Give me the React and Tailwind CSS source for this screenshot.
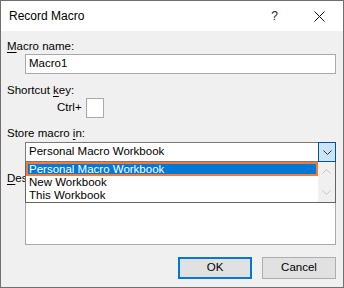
import React from 'react';

// Excel "Record Macro" dialog with the store-in dropdown open
const Chevron = ({ up, color = '#333' }) => (
  <svg width="9" height="5" viewBox="0 0 9 5" className="block">
    <path d={up ? 'M0.5 4.5 L4.5 0.5 L8.5 4.5' : 'M0.5 0.5 L4.5 4.5 L8.5 0.5'} fill="none" stroke={color} strokeWidth="1" />
  </svg>
);

const Label = ({ pre, u, post, className = '' }) => (
  <div className={`h-[15px] leading-[15px] ${className}`}>
    {pre}<span className="underline underline-offset-[2px]">{u}</span>{post}
  </div>
);

export default function App() {
  const options = ['Personal Macro Workbook', 'New Workbook', 'This Workbook'];

  return (
    <div
      className="w-[344px] h-[288px] border border-[#707070] bg-[#f0f0f0] flex flex-col text-[11.5px] text-black"
      style={{ fontFamily: '"Liberation Sans", Arial, sans-serif' }}
    >
      {/* title bar */}
      <div className="h-[30px] bg-white flex items-center pl-[8px] pr-[18px] shrink-0">
        <span className="text-[12px]">Record Macro</span>
        <span className="ml-auto mr-[36px] text-[12px] text-[#222]">?</span>
        <svg width="11" height="11" viewBox="0 0 11 11">
          <path d="M0.5 0.5 L10.5 10.5 M10.5 0.5 L0.5 10.5" stroke="#111" strokeWidth="1" />
        </svg>
      </div>

      <div className="flex flex-col pl-[6px] pr-[7px]">
        <Label className="mt-[8px]" u="M" post="acro name:" />
        <div className="ml-[18px] h-[20px] bg-white border border-[#a9a9a9] flex items-center pl-[3px]">
          Macro1
        </div>

        <Label className="mt-[9px]" pre="Shortcut " u="k" post="ey:" />
        <div className="h-[20px] flex items-center pl-[50px]">
          <span>Ctrl+</span>
          <div className="ml-[4px] w-[18px] h-[20px] bg-white border border-[#a9a9a9]" />
        </div>

        <Label className="mt-[8px]" pre="Store macro " u="i" post="n:" />
        <div className="relative ml-[18px] mt-[1px] z-10">
          <div className="h-[20px] bg-white border border-[#7a7a7a] flex items-center pl-[3px]">
            <span className="flex-1">Personal Macro Workbook</span>
            <div className="w-[18px] h-[20px] -mr-px bg-[#cce4f7] border border-[#005499] flex items-center justify-center">
              <Chevron color="#333" />
            </div>
          </div>
          <div className="absolute left-0 right-0 top-full h-[41px] bg-white border border-t-0 border-[#646464] flex">
            <div className="flex-1 flex flex-col">
              <div className="h-[14px] leading-[14px] bg-[#0078d7] shadow-[inset_0_0_0_2px_#f47a3a] text-white pl-[3px]">
                {options[0]}
              </div>
              <div className="h-[13px] leading-[13px] pl-[3px]">{options[1]}</div>
              <div className="h-[13px] leading-[13px] pl-[3px]">{options[2]}</div>
            </div>
            <div className="w-[17px] bg-[#f0f0f0] flex flex-col items-center justify-between py-[7px]">
              <Chevron up color="#c2c2c2" />
              <Chevron color="#c2c2c2" />
            </div>
          </div>
        </div>

        <Label className="mt-[9px]" u="D" post="escription:" />
        <div className="ml-[18px] mt-[1px] h-[58px] bg-white border border-[#a9a9a9]" />

        <div className="mt-[12px] flex justify-end gap-[10px]">
          <button className="w-[74px] h-[22px] bg-[#e1e1e1] border-2 border-[#0078d7] flex items-center justify-center">
            OK
          </button>
          <button className="w-[74px] h-[22px] bg-[#e1e1e1] border border-[#adadad] flex items-center justify-center">
            Cancel
          </button>
        </div>
      </div>
    </div>
  );
}
